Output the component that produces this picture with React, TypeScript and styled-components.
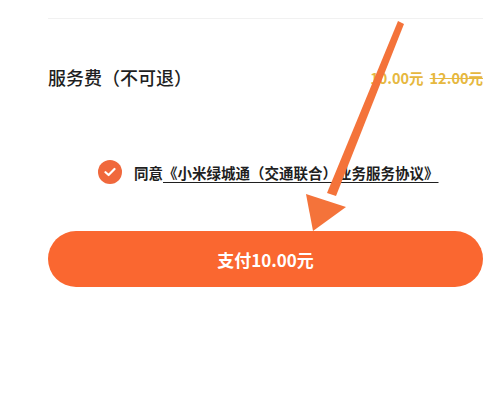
import React from "react";
import styled, { createGlobalStyle } from "styled-components";

const Global = createGlobalStyle`
  html, body { margin: 0; padding: 0; background: #ffffff; }
  body { font-family: "Noto Sans CJK SC", "Noto Sans", sans-serif; }
`;

const Page = styled.div`
  position: relative;
  width: 497px;
  height: 413px;
  overflow: hidden;
  background: #fff;
`;

const Content = styled.div`
  display: flex;
  flex-direction: column;
  padding: 18px 14px 0 48px;
`;

const Divider = styled.div`
  height: 1px;
  background: #f1f1f1;
`;

const FeeRow = styled.div`
  display: flex;
  align-items: center;
  justify-content: space-between;
  margin-top: 44px;
  height: 28px;
`;

const FeeLabel = styled.span`
  font-size: 18px;
  font-weight: 500;
  color: #1f1f1f;
`;

const Prices = styled.div`
  display: flex;
  gap: 6px;
  font-size: 14.5px;
  font-weight: 600;
  color: #e6b83f;
`;

const Old = styled.span`
  text-decoration: line-through;
`;

const AgreeRow = styled.div`
  display: flex;
  align-items: center;
  gap: 12px;
  margin: 69px 0 0 50px;
`;

const Check = styled.span`
  width: 24px;
  height: 24px;
  border-radius: 50%;
  background: #f0683c;
  display: flex;
  align-items: center;
  justify-content: center;
`;

const AgreeText = styled.span`
  font-size: 14.5px;
  font-weight: 600;
  color: #1f1f1f;
`;

const Link = styled.span`
  text-decoration: underline;
  text-underline-offset: 3px;
`;

const PayButton = styled.button`
  margin-top: 47px;
  height: 56px;
  border: none;
  border-radius: 28px;
  background: #fa6730;
  color: #fff;
  font-family: inherit;
  font-size: 17px;
  font-weight: 600;
  display: flex;
  align-items: center;
  justify-content: center;
`;

const Overlay = styled.svg`
  position: absolute;
  left: 0;
  top: 0;
  pointer-events: none;
`;

export default function App() {
  return (
    <Page>
      <Global />
      <Content>
        <Divider />
        <FeeRow>
          <FeeLabel>服务费（不可退）</FeeLabel>
          <Prices>
            <span>10.00元</span>
            <Old>12.00元</Old>
          </Prices>
        </FeeRow>
        <AgreeRow>
          <Check>
            <svg width="12" height="10" viewBox="0 0 12 10">
              <path d="M1.5 5.2 L4.6 8 L10.5 2" fill="none" stroke="#fff" strokeWidth="2.2" strokeLinecap="round" strokeLinejoin="round" />
            </svg>
          </Check>
          <AgreeText>
            同意<Link>《小米绿城通（交通联合）业务服务协议》</Link>
          </AgreeText>
        </AgreeRow>
        <PayButton>支付10.00元</PayButton>
      </Content>
      <Overlay width="497" height="413" viewBox="0 0 497 413">
        <polygon points="398,21 404,24 336,196 327,193" fill="#f4733a" />
        <polygon points="306,194 346,207 313,231" fill="#f4733a" />
      </Overlay>
    </Page>
  );
}
